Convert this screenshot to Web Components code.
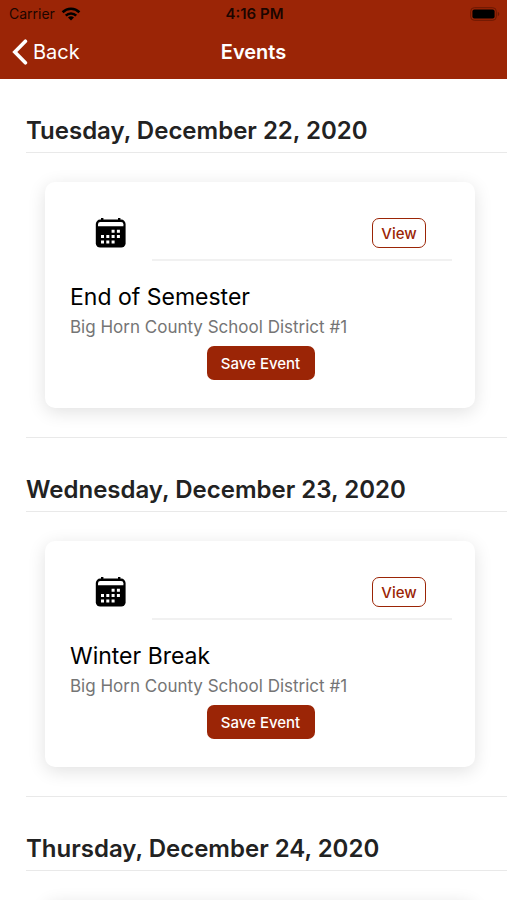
<!DOCTYPE html>
<html lang="en">
<head>
<meta charset="utf-8">
<meta name="viewport" content="width=device-width, initial-scale=1">
<title>Events</title>
<style>
  :root {
    --brand: #9b2506;
    --line: #e9e9e9;
  }
  body {
    margin: 0;
    background: #fff;
    font-family: Inter, "Liberation Sans", sans-serif;
  }
</style>
</head>
<body>
<events-app>
  <status-bar slot="top" carrier="Carrier" time="4:16 PM"></status-bar>
  <nav-bar slot="top" back="Back">Events</nav-bar>
  <day-section date="Tuesday, December 22, 2020">
    <event-card place="Big Horn County School District #1">End of Semester</event-card>
  </day-section>
  <day-section date="Wednesday, December 23, 2020">
    <event-card place="Big Horn County School District #1">Winter Break</event-card>
  </day-section>
  <day-section date="Thursday, December 24, 2020">
    <card-surface></card-surface>
  </day-section>
</events-app>

<script>
class BaseElement extends HTMLElement {
  connectedCallback() {
    if (!this.shadowRoot) {
      this.attachShadow({ mode: 'open' });
    }
    this.shadowRoot.innerHTML = `<style>${this.style_()}</style>${this.template()}`;
  }

  attr(name) {
    return this.getAttribute(name) || '';
  }
}

BaseElement.define = function(name) {
  window.customElements.define(name, this);
}

class EventsApp extends BaseElement {
  style_() {
    return `
      :host { display: flex; flex-direction: column; height: 100vh; overflow: hidden; }
      header { flex: none; background: var(--brand); }
      main { flex: 1; min-height: 0; overflow-y: auto; scrollbar-width: none; }
    `;
  }

  template() {
    return `
      <header><slot name="top"></slot></header>
      <main><slot></slot></main>
    `;
  }
}

class StatusBar extends BaseElement {
  style_() {
    return `
      :host {
        display: grid;
        grid-template-columns: 1fr auto 1fr;
        align-items: center;
        height: 27px;
        padding: 0 7px 0 9px;
        font-size: 14px;
        color: #1c0500;
      }
      .carrier { display: flex; align-items: center; gap: 6px; }
      .time { font-size: 15px; font-weight: 600; }
      .battery { justify-self: end; }
      svg { display: block; }
    `;
  }

  template() {
    return `
      <span class="carrier">${this.attr('carrier')}
        <svg width="20" height="14" viewBox="0 0 20 14" fill="none" stroke="#000" stroke-width="2.6">
          <path d="M1.6 5.2a12 12 0 0 1 16.8 0"/>
          <path d="M4.8 8.6a7.4 7.4 0 0 1 10.4 0"/>
          <path d="M10 13.6l-3-3a4.3 4.3 0 0 1 6 0z" fill="#000" stroke="none"/>
        </svg>
      </span>
      <span class="time">${this.attr('time')}</span>
      <svg class="battery" width="30" height="14" viewBox="0 0 30 14">
        <rect x=".7" y=".7" width="25.6" height="12.6" rx="3.6" fill="none" stroke="#6b1803"/>
        <rect x="2.4" y="2.4" width="22.2" height="9.2" rx="2" fill="#000"/>
        <path d="M27.8 4.8c2 .8 2 3.6 0 4.4z" fill="#6b1803"/>
      </svg>
    `;
  }
}

class NavBar extends BaseElement {
  style_() {
    return `
      :host {
        display: grid;
        grid-template-columns: 1fr auto 1fr;
        align-items: center;
        box-sizing: border-box;
        height: 52px;
        padding: 0 12px 2px;
        color: #fff;
        font-size: 20px;
      }
      a { display: flex; align-items: center; gap: 5px; color: inherit; text-decoration: none; }
      h1 { margin: 0; font-size: 20px; font-weight: 600; }
    `;
  }

  template() {
    return `
      <a href="#">
        <svg width="16" height="26" viewBox="0 0 16 26" fill="none" stroke="currentColor" stroke-width="3.6" stroke-linecap="round" stroke-linejoin="miter">
          <path d="M13.4 2.2L2.8 13l10.6 10.8"/>
        </svg>${this.attr('back')}</a>
      <h1><slot></slot></h1>
    `;
  }
}

class DaySection extends BaseElement {
  style_() {
    return `
      :host { display: block; padding-left: 26px; }
      h2 {
        display: flex;
        align-items: center;
        box-sizing: border-box;
        height: 74px;
        margin: 0;
        padding-top: 30px;
        border-bottom: 1px solid var(--line);
        font-size: 24px;
        font-weight: 600;
        color: #222;
      }
      .events { padding: 29px 32px 29px 19px; border-bottom: 1px solid var(--line); }
    `;
  }

  template() {
    return `
      <h2>${this.attr('date')}</h2>
      <div class="events"><slot></slot></div>
    `;
  }
}

class CardSurface extends BaseElement {
  style_() {
    return `
      :host {
        display: block;
        box-sizing: border-box;
        min-height: 226px;
        padding: 24px 23px 24px 24px;
        border-radius: 10px;
        background: #fff;
        box-shadow: 0 4px 18px rgba(0, 0, 0, .12);
      }
    `;
  }

  template() {
    return '<slot></slot>';
  }
}

class EventCard extends BaseElement {
  style_() {
    return `
      :host { display: block; }
      .top { display: flex; }
      .icon { width: 83px; padding: 12px 0 0 26px; box-sizing: border-box; }
      .actions {
        display: flex;
        flex: 1;
        justify-content: flex-end;
        padding: 12px 26px 11px 0;
        border-bottom: 2px solid #f1f1f1;
      }
      svg { display: block; }
      h3 { margin: 20px 0 0 1px; font-size: 23px; line-height: 32px; font-weight: 400; color: #000; }
      p { margin: 4px 0 9px 1px; font-size: 17px; line-height: 20px; color: #757575; }
      button { box-sizing: border-box; padding: 0; border-radius: 7px; font-family: inherit; font-size: 15px; font-weight: 500; }
      .view { width: 54px; height: 30px; border: 1px solid var(--brand); background: #fff; color: var(--brand); }
      .save { display: block; width: 108px; height: 34px; margin: 0 auto; border: 0; background: var(--brand); color: #fff; }
    `;
  }

  template() {
    return `
      <card-surface>
        <div class="top">
          <div class="icon">
            <svg width="32" height="30" viewBox="0 0 32 30">
              <path d="M6 0h2.4v3H6zM23 0h2.4v3H23z"/>
              <rect x=".8" y="1.6" width="29.8" height="28" rx="4.4"/>
              <path d="M3 8.3V6.2Q3 4 5.4 4H26q2.4 0 2.4 2.2v2.1z" fill="#fff"/>
              <path d="M16.6 11.8h3v3h-3zM21.9 11.8h3v3h-3zM6 17.1h3v3H6zM11.3 17.1h3v3h-3zM16.6 17.1h3v3h-3zM21.9 17.1h3v3h-3zM6 22.4h3v3H6zM11.3 22.4h3v3h-3zM16.6 22.4h3v3h-3z" fill="#fff"/>
            </svg>
          </div>
          <div class="actions"><button class="view" type="button">View</button></div>
        </div>
        <h3><slot></slot></h3>
        <p>${this.attr('place')}</p>
        <button class="save" type="button">Save Event</button>
      </card-surface>
    `;
  }
}

EventsApp.define('events-app');
StatusBar.define('status-bar');
NavBar.define('nav-bar');
DaySection.define('day-section');
CardSurface.define('card-surface');
EventCard.define('event-card');
</script>
</body>
</html>
